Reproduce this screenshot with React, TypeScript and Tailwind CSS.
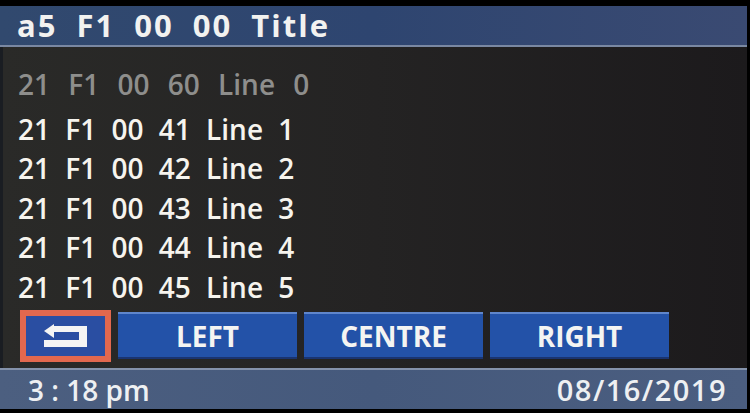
export default function App() {
  const lines = [
    '21 F1 00 41 Line 1',
    '21 F1 00 42 Line 2',
    '21 F1 00 43 Line 3',
    '21 F1 00 44 Line 4',
    '21 F1 00 45 Line 5',
  ];

  return (
    <div className="w-[750px] h-[413px] bg-black overflow-hidden font-['Open_Sans',sans-serif] select-none">
      <div className="w-[747px] h-full pt-[6px] pb-[4px] flex flex-col">
        {/* Title bar */}
        <div className="h-[41px] shrink-0 bg-gradient-to-r from-[#31496e] via-[#2e4570] to-[#3a4a72] border-b-2 border-[#7a88a2] flex items-center pl-[17px]">
          <span className="text-[31px] font-bold text-[#f2f2f0] tracking-[2px] [word-spacing:9px] leading-none">
            a5 F1 00 00 Title
          </span>
        </div>

        {/* Body */}
        <div className="flex-1 bg-gradient-to-r from-[#2a2a28] via-[#242323] to-[#1c1a1c] border-l-[3px] border-[#1a1d22] pl-[15px] pt-[17px] flex flex-col">
          <div className="h-[40px] flex items-center text-[28px] font-semibold text-[#8e8e8c] [word-spacing:11px] leading-none">
            21 F1 00 60 Line 0
          </div>
          <div className="mt-[5px] flex flex-col">
            {lines.map((l) => (
              <div
                key={l}
                className="h-[39.5px] flex items-center text-[28px] font-semibold text-[#f6f4ee] [word-spacing:8px] leading-none"
              >
                {l}
              </div>
            ))}
          </div>

          {/* Soft keys */}
          <div className="mt-[3px] flex items-center gap-[7px] pl-[2px]">
            <div className="w-[91px] h-[52px] border-[6px] border-[#e2684e] bg-[#2a4ea2] flex items-center justify-center">
              <svg width="44" height="24" viewBox="0 0 44 24" fill="#f4f4f4">
                <polygon points="0,7 10,0 10,14" />
                <rect x="9" y="2" width="34" height="6" />
                <rect x="35" y="2" width="8" height="21" />
                <rect x="0" y="16" width="43" height="7" />
              </svg>
            </div>
            {['LEFT', 'CENTRE', 'RIGHT'].map((b) => (
              <div
                key={b}
                className="w-[179px] h-[47px] bg-[#2352a8] border-t-2 border-[#5f86cc] border-b-2 border-b-[#1a3470] flex items-center justify-center text-[28px] font-bold text-[#f4f4f2] leading-none"
              >
                {b}
              </div>
            ))}
          </div>
        </div>

        {/* Status bar */}
        <div className="h-[41px] shrink-0 bg-gradient-to-r from-[#4c5f80] via-[#45597c] to-[#4b5e80] border-t-2 border-[#8492ab] flex items-center justify-between pl-[28px] pr-[20px]">
          <span className="text-[28px] font-semibold text-[#eef0f2] leading-none">3 : 18 pm</span>
          <span className="text-[29px] font-semibold text-[#eef0f2] tracking-[1.5px] leading-none">08/16/2019</span>
        </div>
      </div>
    </div>
  );
}
